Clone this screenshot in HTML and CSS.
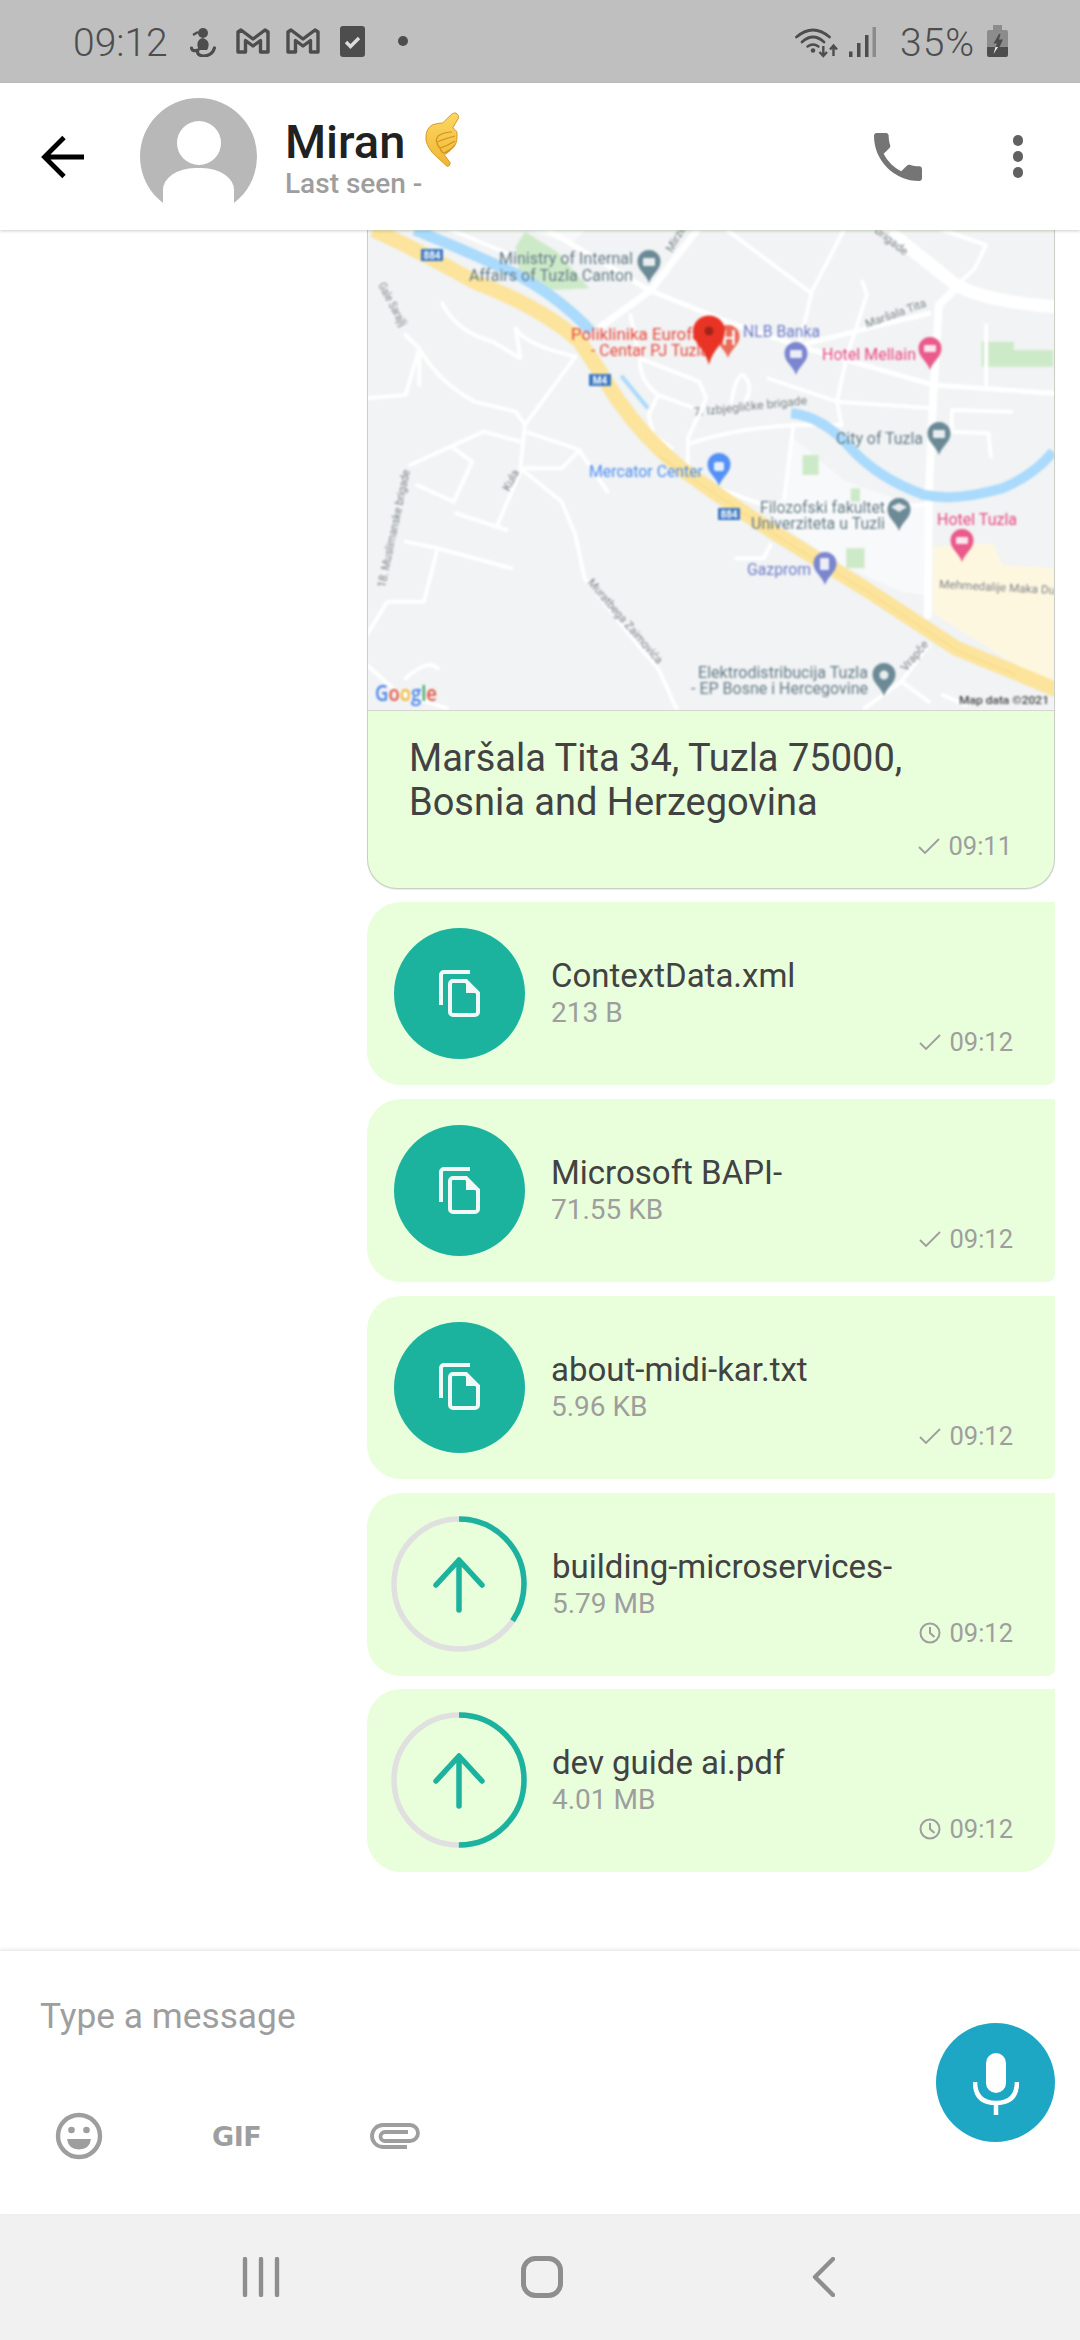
FILE: index.html
```html
<!DOCTYPE html>
<html lang="en">
<head>
<meta charset="utf-8">
<title>Miran</title>
<link rel="stylesheet" href="styles.css">
</head>
<body>
<div class="app">
  <div class="status">
    <span class="clock">09:12</span>
    <svg class="st st-person" width="26" height="30" viewBox="0 0 26 30"><circle cx="13" cy="6" r="5" fill="#4d4d4d"/><path d="M8 5 L3 8" stroke="#4d4d4d" stroke-width="2.5"/><path d="M13 11 C7 12 6 18 9 23 L17 23 C20 18 19 13 13 11Z" fill="#4d4d4d"/><path d="M1.5 21 Q2 25 8 23 Q6 28 13 29 Q22 29 24.5 21" fill="none" stroke="#4d4d4d" stroke-width="3.2" stroke-linecap="round"/></svg>
    <svg class="st st-m1" width="34" height="26" viewBox="0 0 34 26"><path d="M2 4 V24 H9.500 V12.500 L17 18 L24.500 12.500 V24 H32 V4 L29 2 L17 11 L5 2 Z" fill="none" stroke="#4d4d4d" stroke-width="3.400" stroke-linejoin="round"/></svg>
    <svg class="st st-m2" width="34" height="26" viewBox="0 0 34 26"><path d="M2 4 V24 H9.500 V12.500 L17 18 L24.500 12.500 V24 H32 V4 L29 2 L17 11 L5 2 Z" fill="none" stroke="#4d4d4d" stroke-width="3.400" stroke-linejoin="round"/></svg>
    <svg class="st st-check" width="25" height="31" viewBox="0 0 25 31"><rect width="25" height="31" rx="3" fill="#4d4d4d"/><path d="M6 16 L10.500 20.500 L19 12" fill="none" stroke="#dcdcdc" stroke-width="3.400"/></svg>
    <span class="st-dot"></span>
    <span class="grow"></span>
    <svg class="st" width="44" height="32" viewBox="0 0 44 32"><g fill="none" stroke="#4d4d4d" stroke-width="2.800" stroke-linecap="round"><path d="M1.500 11 Q18 -3 34.500 11"/><path d="M7 16 Q18 6 29 16"/><path d="M12.500 20.500 Q18 16.500 23.500 20.500" stroke-width="2.400"/></g><circle cx="18" cy="24.500" r="2.300" fill="#4d4d4d"/><path d="M28.300 20 V29 M24.500 26 L28.300 30 L32 26 M38.500 30 V20.500 M35 23.500 L38.500 19.500 L42 23.500" fill="none" stroke="#4d4d4d" stroke-width="2.400"/></svg>
    <svg class="st st-signal" width="28" height="30" viewBox="0 0 28 30"><rect x="0" y="24.500" width="3.500" height="5.500" fill="#4d4d4d"/><rect x="8" y="16" width="3.500" height="14" fill="#4d4d4d"/><rect x="16" y="8" width="3.500" height="22" fill="#4d4d4d"/><rect x="23.500" y="0" width="3.500" height="30" fill="#8c8c8c"/></svg>
    <span class="batt-text">35%</span>
    <svg class="st st-batt" width="21" height="32" viewBox="0 0 21 32"><rect x="6" y="0" width="9" height="6" fill="#8c8c8c"/><rect x="0" y="5" width="21" height="18" rx="2" fill="#8c8c8c"/><path d="M0 22 H21 V30 A2 2 0 0 1 19 32 H2 A2 2 0 0 1 0 30Z" fill="#4d4d4d"/><path d="M12 9 L6.500 18.500 H10 L8.500 22 H12.500 L16 14.500 H12 L13.500 9Z" fill="#4d4d4d"/><path d="M11 22 H8.500 L6.500 29 Z" fill="#f2f2f2"/></svg>
  </div>

  <header class="header">
    <svg class="back" width="44" height="44" viewBox="0 0 44 44"><path d="M23 2.500 L3.500 22 L23 41.500 M3.500 22 H43" fill="none" stroke="#000" stroke-width="4.800"/></svg>
    <div class="avatar"><span class="avatar-head"></span><span class="avatar-body"></span></div>
    <div class="who">
      <div class="name-row">
        <span class="name">Miran</span>
        <svg class="hand" width="38" height="56" viewBox="13 9 36 56"><defs><linearGradient id="hg" x1="0" y1="0" x2="0" y2="1"><stop offset="0" stop-color="#fbd862"/><stop offset="1" stop-color="#f2b632"/></linearGradient></defs><path d="M45 10 Q48 12 47.500 15 L41.700 25 Q47 28 46 32 Q46.500 38 44.300 41.700 L37.300 49.300 L33.300 51.700 L39.300 60 Q39 63.500 36 63.300 L21.700 50 Q14 41 15 33 Q15.500 25 21.700 21.700 Q27 20 31.700 20 L40 11.700 Q42.500 9.500 45 10Z" fill="url(#hg)" stroke="#d59a2c" stroke-width="1"/><path d="M27 33 Q33 29 41 29 M26 39 Q33 36 44 33 M29 45 Q36 43 44 38 M33 50 Q39 48 44 42 M27 33 Q24 38 26 39 Q26 43 29 45 Q30 49 33 50" fill="none" stroke="#cf9224" stroke-width="1.200"/></svg>
      </div>
      <div class="seen">Last seen -</div>
    </div>
    <span class="grow"></span>
    <svg class="phone" width="64" height="64" viewBox="0 0 24 24"><path fill="#757575" d="M6.620 10.790c1.440 2.830 3.760 5.140 6.590 6.590l2.200-2.200c.27-.27.67-.36 1.020-.24 1.120.37 2.330.57 3.570.57.550 0 1 .45 1 1V20c0 .55-.45 1-1 1-9.390 0-17-7.610-17-17 0-.55.45-1 1-1h3.500c.55 0 1 .45 1 1 0 1.250.2 2.450.57 3.570.11.350.03.740-.25 1.020l-2.200 2.200z"/></svg>
    <div class="dots"><span></span><span></span><span></span></div>
  </header>

  <main class="chat">
    <article class="bubble loc">
      <svg class="map" width="688" height="480" viewBox="0 0 688 480">
        <rect width="688" height="480" fill="#f1f3f4"/>
        <g transform="scale(.459 .3333) translate(-16 -15)">
          <path fill="#fef7e0" d="M1250 965 L1380 955 L1400 1020 L1511 1030 L1511 1400 L1430 1320 L1250 1165Z"/>
          <path fill="#f8f9fa" d="M945 640 L1060 770 L1230 850 L1230 1110 L1180 1100 L1050 1020 L950 930 L880 850 L925 820Z"/>
          <path fill="#f8f9fa" d="M370 15 L490 15 L460 60Z"/>
          <path fill="#cdeac8" d="M340 65 L360 20 L430 80 L500 190 L420 195 L350 170Z"/>
          <path fill="#cdeac8" d="M965 690 H1000 V750 H965Z M1070 790 H1090 V830 H1070Z M1060 970 H1100 V1030 H1060Z M1355 350 H1425 V375 H1511 V425 H1355Z"/>
          <g class="road" stroke-width="7">
            <path d="M735 15 L635 195 L525 305"/>
            <path d="M1150 15 L1290 170 Q1340 225 1511 245" stroke-width="13"/>
            <path d="M1295 195 L1262 240 L1250 500 L1240 800 L1238 1170" stroke-width="8"/>
            <path d="M410 15 L630 195 L800 290 L960 365 L1250 480 L1511 505" stroke-width="5"/>
            <path d="M960 360 L1240 265" stroke-width="5"/>
          </g>
          <g class="road" stroke-width="4">
            <path d="M800 15 L980 200 M1055 15 L985 200 L960 350"/>
            <path d="M1270 15 L1365 60 L1340 130 L1310 170"/>
            <path d="M890 460 L1040 530 L1250 550 M1095 170 L1105 210 L1060 400 L1040 530 L1050 600"/>
            <path d="M590 270 L610 400 Q610 470 650 510 L730 550 M610 400 L740 470 L755 520 L715 640 L715 720"/>
            <path d="M650 510 L630 570 L640 630 L680 670"/>
            <path d="M720 655 Q820 610 950 600 L1050 600 M945 600 L925 820"/>
            <path d="M810 530 Q820 450 835 450 Q860 480 840 530"/>
            <path d="M180 235 Q210 320 290 350 L350 400 L340 310 M340 310 Q360 360 470 395"/>
            <path d="M100 330 L130 370 Q170 470 250 530 L340 560 L360 600 M16 520 L100 510 L130 370 L130 480"/>
            <path d="M470 395 L360 600 L350 730 L440 830 L470 930 L490 1060 L600 1250 L650 1330 L690 1450"/>
            <path d="M110 720 L270 620 L350 650 M360 620 L470 670 L480 680 L540 800 M480 675 L440 730 L360 730 M205 670 L245 710 L205 830 L125 780"/>
            <path d="M100 950 L170 970 L330 1030 M170 970 L140 1130 L60 1130 L16 1230 M210 865 L320 915 M350 740 L300 900"/>
            <path d="M820 1000 L880 1000 L895 960 M1100 1450 L1180 1370 L1240 1260 M1180 1370 L1240 1430 M1270 1410 L1320 1440"/>
            <path d="M16 1320 L80 1400 L190 1450 M100 1360 Q150 1300 170 1330"/>
            <path d="M1290 555 L1420 560 M1290 555 L1290 620 L1370 625 L1375 695 M1365 300 L1365 480"/>
            <path d="M780 790 L900 850 L1230 840"/>
            <path d="M200 15 L330 90"/>
          </g>
          <g class="water">
            <path d="M120 15 Q220 70 330 140 Q430 210 505 320" stroke-width="11"/>
            <path d="M940 565 Q1010 575 1070 670 Q1130 760 1230 810 Q1300 830 1400 790 Q1470 750 1511 680" stroke-width="10"/>
            <path d="M570 452 L628 550" stroke-width="4"/>
          </g>
          <path class="highway" d="M30 15 Q120 70 250 170 Q400 250 480 350 Q520 430 560 520 Q620 640 700 730 Q800 830 900 920 L1100 1090 L1300 1270 L1520 1395"/>
          <path class="median" d="M650 690 Q720 760 800 830 L900 925 L1100 1095 L1300 1275 L1430 1350"/>
        </g>
        <g class="shield">
          <rect x="54" y="19" width="22" height="12"/><rect x="222" y="144" width="22" height="12"/><rect x="351" y="278" width="22" height="12"/>
        </g>
        <g class="shield-t">
          <text x="65" y="29">884</text><text x="233" y="154">M4</text><text x="362" y="288">884</text>
        </g>
        <g class="pins">
          <path class="p-gov" transform="translate(282 20)" d="M0 33 C-3 24 -11.500 20 -11.500 11.500 A11.500 11.500 0 1 1 11.500 11.500 C11.500 20 3 24 0 33Z"/>
          <path class="p-gov" transform="translate(572 192)" d="M0 33 C-3 24 -11.500 20 -11.500 11.500 A11.500 11.500 0 1 1 11.500 11.500 C11.500 20 3 24 0 33Z"/>
          <path class="p-gov" transform="translate(532 268)" d="M0 33 C-3 24 -11.500 20 -11.500 11.500 A11.500 11.500 0 1 1 11.500 11.500 C11.500 20 3 24 0 33Z"/>
          <path class="p-gov" transform="translate(517 433)" d="M0 33 C-3 24 -11.500 20 -11.500 11.500 A11.500 11.500 0 1 1 11.500 11.500 C11.500 20 3 24 0 33Z"/>
          <path class="p-ind" transform="translate(429 112)" d="M0 33 C-3 24 -11.500 20 -11.500 11.500 A11.500 11.500 0 1 1 11.500 11.500 C11.500 20 3 24 0 33Z"/>
          <path class="p-ind" transform="translate(458 322)" d="M0 33 C-3 24 -11.500 20 -11.500 11.500 A11.500 11.500 0 1 1 11.500 11.500 C11.500 20 3 24 0 33Z"/>
          <path class="p-pink" transform="translate(563 107)" d="M0 33 C-3 24 -11.500 20 -11.500 11.500 A11.500 11.500 0 1 1 11.500 11.500 C11.500 20 3 24 0 33Z"/>
          <path class="p-pink" transform="translate(595 299)" d="M0 33 C-3 24 -11.500 20 -11.500 11.500 A11.500 11.500 0 1 1 11.500 11.500 C11.500 20 3 24 0 33Z"/>
          <path class="p-blue" transform="translate(352 223)" d="M0 33 C-3 24 -11.500 20 -11.500 11.500 A11.500 11.500 0 1 1 11.500 11.500 C11.500 20 3 24 0 33Z"/>
          <path class="p-hosp" transform="translate(361 95)" d="M0 33 C-3 24 -11.500 20 -11.500 11.500 A11.500 11.500 0 1 1 11.500 11.500 C11.500 20 3 24 0 33Z"/>
        </g>
        <g class="pin-in">
          <rect x="276" y="28" width="12" height="8" rx="1"/><rect x="566" y="200" width="12" height="8" rx="1"/><path d="M524 277 L532 273 L540 277 L532 282Z"/><circle cx="517" cy="445" r="4.500"/><rect x="423" y="120" width="12" height="8" rx="1"/><rect x="453" y="328" width="9" height="12" rx="1"/><rect x="557" y="115" width="12" height="7" rx="1"/><rect x="589" y="307" width="12" height="7" rx="1"/><rect x="347" y="232" width="10" height="9" rx="2"/>
        </g>
        <text class="t-hosp" x="355" y="115">H</text>
        <text class="t-gray lab" x="132" y="34" textLength="134" lengthAdjust="spacingAndGlyphs">Ministry of Internal</text>
        <text class="t-gray lab" x="102" y="51" textLength="164" lengthAdjust="spacingAndGlyphs">Affairs of Tuzla Canton</text>
        <text class="t-red lab" x="204" y="110" textLength="151" lengthAdjust="spacingAndGlyphs">Poliklinika Eurofarm</text>
        <text class="t-red lab" x="224" y="126" textLength="118" lengthAdjust="spacingAndGlyphs">- Centar PJ Tuzla</text>
        <text class="t-ind lab" x="376" y="107" textLength="77" lengthAdjust="spacingAndGlyphs">NLB Banka</text>
        <text class="t-pink lab" x="455" y="130" textLength="94" lengthAdjust="spacingAndGlyphs">Hotel Mellain</text>
        <text class="t-gray lab" x="469" y="214" textLength="87" lengthAdjust="spacingAndGlyphs">City of Tuzla</text>
        <text class="t-blue lab" x="222" y="247" textLength="114" lengthAdjust="spacingAndGlyphs">Mercator Center</text>
        <text class="t-gray lab" x="393" y="283" textLength="125" lengthAdjust="spacingAndGlyphs">Filozofski fakultet</text>
        <text class="t-gray lab" x="384" y="299" textLength="134" lengthAdjust="spacingAndGlyphs">Univerziteta u Tuzli</text>
        <text class="t-ind lab" x="380" y="345" textLength="64" lengthAdjust="spacingAndGlyphs">Gazprom</text>
        <text class="t-pink lab" x="570" y="295" textLength="80" lengthAdjust="spacingAndGlyphs">Hotel Tuzla</text>
        <text class="t-gray lab" x="331" y="448" textLength="170" lengthAdjust="spacingAndGlyphs">Elektrodistribucija Tuzla</text>
        <text class="t-gray lab" x="324" y="464" textLength="177" lengthAdjust="spacingAndGlyphs">- EP Bosne i Hercegovine</text>
        <text class="t-data" x="592" y="474" textLength="90" lengthAdjust="spacingAndGlyphs">Map data ©2021</text>
        <text class="t-google" x="8" y="471" textLength="62" lengthAdjust="spacingAndGlyphs"><tspan class="g-b">G</tspan><tspan class="g-r">o</tspan><tspan class="g-y">o</tspan><tspan class="g-b">g</tspan><tspan class="g-g">l</tspan><tspan class="g-r">e</tspan></text>
        <text class="t-road" transform="translate(500 98) rotate(-20)">Maršala Tita</text>
        <text class="t-road" transform="translate(327 186) rotate(-6)" textLength="114" lengthAdjust="spacingAndGlyphs">7. Izbjegličke brigade</text>
        <text class="t-road" transform="translate(572 358) rotate(3)" textLength="116" lengthAdjust="spacingAndGlyphs">Mehmedalije Maka Du</text>
        <text class="t-road" transform="translate(220 353) rotate(49)" textLength="108" lengthAdjust="spacingAndGlyphs">Muratbega Zaimovića</text>
        <text class="t-road" transform="translate(18 358) rotate(-78)" textLength="120" lengthAdjust="spacingAndGlyphs">18. Muslimanske brigade</text>
        <text class="t-road" transform="translate(11 55) rotate(62)" textLength="48" lengthAdjust="spacingAndGlyphs">Gale Sarajlj</text>
        <text class="t-road" transform="translate(305 23) rotate(-60)">Mirze</text>
        <text class="t-road" transform="translate(507 2) rotate(38)">brigade</text>
        <text class="t-road" transform="translate(142 262) rotate(-62)">Kula</text>
        <text class="t-road" transform="translate(539 442) rotate(-50)">Vrapče</text>
        <g class="red-pin">
          <path d="M342 135 C338 118 326 114 326 101 A16 15.500 0 1 1 358 101 C358 114 346 118 342 135Z"/>
          <circle class="red-dot" cx="342" cy="101" r="4.500"/>
        </g>
      </svg>
      <div class="loc-body">
        <div class="loc-text">Maršala Tita 34, Tuzla 75000,<br>Bosnia and Herzegovina</div>
        <div class="meta meta-loc">
          <svg class="tick" width="22" height="16" viewBox="0 0 22 16"><path d="M1 9 L7 15 L21 1" fill="none" stroke="#9e9e9e" stroke-width="1.800"/></svg>
          <span>09:11</span>
        </div>
      </div>
    </article>

    <article class="bubble file">
      <div class="file-icon">
        <svg width="42" height="48" viewBox="0 0 42 48"><path d="M2 35 V5 A3 3 0 0 1 5 2 H31" fill="none" stroke="#f0f9f6" stroke-width="4"/><path d="M14 11 H27 L39 23 V42 A3 3 0 0 1 36 45 H14 A3 3 0 0 1 11 42 V14 A3 3 0 0 1 14 11Z" fill="none" stroke="#f0f9f6" stroke-width="4"/><path d="M27 11 L39 23 H27Z" fill="#f0f9f6"/></svg>
      </div>
      <div class="file-info"><div class="fname">ContextData.xml</div><div class="fsize">213 B</div></div>
      <div class="meta meta-file">
        <svg class="tick" width="22" height="16" viewBox="0 0 22 16"><path d="M1 9 L7 15 L21 1" fill="none" stroke="#9e9e9e" stroke-width="1.800"/></svg>
        <span>09:12</span>
      </div>
    </article>

    <article class="bubble file">
      <div class="file-icon">
        <svg width="42" height="48" viewBox="0 0 42 48"><path d="M2 35 V5 A3 3 0 0 1 5 2 H31" fill="none" stroke="#f0f9f6" stroke-width="4"/><path d="M14 11 H27 L39 23 V42 A3 3 0 0 1 36 45 H14 A3 3 0 0 1 11 42 V14 A3 3 0 0 1 14 11Z" fill="none" stroke="#f0f9f6" stroke-width="4"/><path d="M27 11 L39 23 H27Z" fill="#f0f9f6"/></svg>
      </div>
      <div class="file-info"><div class="fname">Microsoft BAPI-</div><div class="fsize">71.55 KB</div></div>
      <div class="meta meta-file">
        <svg class="tick" width="22" height="16" viewBox="0 0 22 16"><path d="M1 9 L7 15 L21 1" fill="none" stroke="#9e9e9e" stroke-width="1.800"/></svg>
        <span>09:12</span>
      </div>
    </article>

    <article class="bubble file">
      <div class="file-icon">
        <svg width="42" height="48" viewBox="0 0 42 48"><path d="M2 35 V5 A3 3 0 0 1 5 2 H31" fill="none" stroke="#f0f9f6" stroke-width="4"/><path d="M14 11 H27 L39 23 V42 A3 3 0 0 1 36 45 H14 A3 3 0 0 1 11 42 V14 A3 3 0 0 1 14 11Z" fill="none" stroke="#f0f9f6" stroke-width="4"/><path d="M27 11 L39 23 H27Z" fill="#f0f9f6"/></svg>
      </div>
      <div class="file-info"><div class="fname">about-midi-kar.txt</div><div class="fsize">5.96 KB</div></div>
      <div class="meta meta-file">
        <svg class="tick" width="22" height="16" viewBox="0 0 22 16"><path d="M1 9 L7 15 L21 1" fill="none" stroke="#9e9e9e" stroke-width="1.800"/></svg>
        <span>09:12</span>
      </div>
    </article>

    <article class="bubble file">
      <svg class="ring" width="136" height="136" viewBox="0 0 136 136">
        <circle class="ring-bg" cx="68" cy="68" r="65"/>
        <circle class="ring-fg" cx="68" cy="68" r="65" stroke-dasharray="141 408" transform="rotate(-90 68 68)"/>
        <path class="ring-arrow" d="M68 94 V46 M45 69 L68 44 L91 69"/>
      </svg>
      <div class="file-info info-up"><div class="fname">building-microservices-</div><div class="fsize">5.79 MB</div></div>
      <div class="meta meta-file">
        <svg class="clock-ic" width="22" height="22" viewBox="0 0 22 22"><circle cx="11" cy="11" r="9.500" fill="none" stroke="#9e9e9e" stroke-width="2"/><path d="M11 5 V11 L15.500 15" fill="none" stroke="#9e9e9e" stroke-width="2"/></svg>
        <span>09:12</span>
      </div>
    </article>

    <article class="bubble file last">
      <svg class="ring" width="136" height="136" viewBox="0 0 136 136">
        <circle class="ring-bg" cx="68" cy="68" r="65"/>
        <circle class="ring-fg" cx="68" cy="68" r="65" stroke-dasharray="204 408" transform="rotate(-90 68 68)"/>
        <path class="ring-arrow" d="M68 94 V46 M45 69 L68 44 L91 69"/>
      </svg>
      <div class="file-info info-up"><div class="fname">dev guide ai.pdf</div><div class="fsize">4.01 MB</div></div>
      <div class="meta meta-file">
        <svg class="clock-ic" width="22" height="22" viewBox="0 0 22 22"><circle cx="11" cy="11" r="9.500" fill="none" stroke="#9e9e9e" stroke-width="2"/><path d="M11 5 V11 L15.500 15" fill="none" stroke="#9e9e9e" stroke-width="2"/></svg>
        <span>09:12</span>
      </div>
    </article>
  </main>

  <footer class="composer">
    <div class="input-col">
      <div class="placeholder">Type a message</div>
      <div class="tools">
        <svg class="tool-smile" width="48" height="48" viewBox="0 0 48 48"><circle cx="24" cy="24" r="21" fill="none" stroke="#9e9e9e" stroke-width="4.400"/><circle cx="16.500" cy="18" r="3.300" fill="#9e9e9e"/><circle cx="31.500" cy="18" r="3.300" fill="#9e9e9e"/><path d="M12 27 H36 Q34.500 37.500 24 37.500 Q13.500 37.500 12 27Z" fill="#9e9e9e"/></svg>
        <span class="tool-gif">GIF</span>
        <svg class="tool-clip" width="52" height="26" viewBox="0 0 52 26"><path d="M37 24 H13 A11 11 0 0 1 13 2 H40 A8 8 0 0 1 40 18 H15 A4.500 4.500 0 0 1 15 9 H38" fill="none" stroke="#9e9e9e" stroke-width="3.800"/></svg>
      </div>
    </div>
    <div class="mic">
      <svg width="46" height="64" viewBox="0 0 46 64"><rect x="13" y="2" width="20" height="40" rx="10" fill="#fff"/><path d="M2 31 Q2 52 23 52 Q44 52 44 31 M23 52 V64" fill="none" stroke="#fff" stroke-width="4.500"/></svg>
    </div>
  </footer>

  <nav class="navbar">
    <svg width="38" height="40" viewBox="0 0 38 40"><path d="M3 2 V38 M19 2 V38 M35 2 V38" stroke="#8e8e8e" stroke-width="4.400" stroke-linecap="round"/></svg>
    <svg class="nav-home" width="42" height="42" viewBox="0 0 42 42"><rect x="2.500" y="2.500" width="37" height="37" rx="12" fill="none" stroke="#8e8e8e" stroke-width="5"/></svg>
    <svg class="nav-back" width="23" height="40" viewBox="0 0 23 40"><path d="M21 2 L3 20 L21 38" fill="none" stroke="#8e8e8e" stroke-width="4.400" stroke-linecap="round" stroke-linejoin="round"/></svg>
  </nav>
</div>
</body>
</html>
```
FILE: styles.css
```css
* { box-sizing: border-box; }
html, body { margin: 0; padding: 0; }
body { width: 1080px; height: 2340px; overflow: hidden; font-family: Roboto, "Noto Sans", sans-serif; background: #fff; }
svg { display: block; flex: none; }
.app { display: flex; flex-direction: column; width: 1080px; height: 2340px; }
.grow { flex: 1; }

.status { height: 83px; flex: none; background: #bfbfbf; display: flex; align-items: flex-start; padding: 0 72px 0 73px; color: #4d4d4d; font-weight: 300; font-size: 39px; }
.clock { line-height: 44px; margin-top: 21px; width: 93px; }
.st { margin-top: 26px; }
.st-person { margin-left: 24px; margin-top: 27px; }
.st-m1 { margin-left: 20px; margin-top: 28px; }
.st-m2 { margin-left: 16px; margin-top: 28px; }
.st-check { margin-left: 20px; }
.st-dot { width: 10px; height: 10px; border-radius: 50%; background: #4d4d4d; margin: 36px 0 0 33px; }
.st-signal { margin: 27px 0 0 10px; }
.batt-text { margin: 21px 0 0 23px; line-height: 44px; letter-spacing: 1px; width: 87px; }
.st-batt { margin-top: 25px; }

.header { height: 147px; flex: none; background: #fff; display: flex; align-items: center; padding: 0 0 0 41px; box-shadow: 0 1px 3px rgba(0,0,0,.2); position: relative; z-index: 2; }
.avatar { width: 117px; height: 117px; border-radius: 50%; background: #b8b8b8; margin-left: 55px; display: flex; flex-direction: column; align-items: center; flex: none; }
.avatar-head { width: 44px; height: 44px; border-radius: 50%; background: #fff; margin-top: 23px; flex: none; }
.avatar-body { width: 71px; height: 52px; flex: none; margin-top: 3px; background: #fff; border-radius: 32px 32px 0 0 / 22px 22px 0 0; }
.who { margin-left: 28px; display: flex; flex-direction: column; }
.name-row { display: flex; align-items: center; height: 56px; }
.name { font-size: 47px; font-weight: 500; color: #212121; line-height: 56px; }
.hand { margin: -4px 0 0 18px; }
.seen { font-size: 28px; font-weight: 500; color: #9e9e9e; line-height: 30px; margin-top: -1px; }
.phone { margin-right: 83px; }
.dots { display: flex; flex-direction: column; gap: 5.500px; margin-right: 57px; }
.dots span { width: 10.500px; height: 10.500px; border-radius: 50%; background: #616161; }

.chat { flex: 1; display: flex; flex-direction: column; align-items: flex-end; gap: 13.750px; padding: 0 25px 0 0; overflow: hidden; background: #fff; min-height: 0; }
.bubble { width: 688px; background: #e9fedb; flex: none; }
.loc { border: 1px solid #c9cfc4; border-top: 0; border-radius: 0 0 30px 30px; overflow: hidden; height: 658.500px; box-shadow: 0 1px 1px rgba(0,0,0,.08); }
.map { margin: 0 0 0 -1px; filter: blur(.9px); }
.loc-body { border-top: 1px solid #d4d6d0; padding: 26px 0 0 41px; position: relative; height: 178px; }
.loc-text { font-size: 38px; line-height: 43.500px; color: #424242; }
.meta { display: flex; align-items: center; font-size: 25.500px; color: #9e9e9e; position: absolute; right: 42px; line-height: 30px; }
.meta span { margin-left: 8px; }
.meta-loc { bottom: 27px; }
.file { position: relative; height: 183px; display: flex; align-items: flex-start; border-radius: 34px 0 8px 34px; padding: 26px 0 0 27px; }
.file.last { border-radius: 34px 0 34px 34px; }
.meta-file { top: 125px; }
.file-icon { width: 131px; height: 131px; border-radius: 50%; background: #1cb39e; display: flex; align-items: center; justify-content: center; flex: none; }
.file-info { margin-left: 26px; }
.fname { font-size: 33px; line-height: 40px; color: #424242; margin-top: 28px; }
.fsize { font-size: 28px; line-height: 32px; color: #9e9e9e; margin-top: 1px; }
.ring { margin: -3px 0 0 -3px; }
.info-up { margin-left: 25px; }
.ring-bg { fill: none; stroke: #e0e0e0; stroke-width: 5.500; }
.ring-fg { fill: none; stroke: #1cb39e; stroke-width: 5.500; }
.ring-arrow { fill: none; stroke: #1cb39e; stroke-width: 5.500; stroke-linecap: round; stroke-linejoin: round; }

.composer { height: 264px; flex: none; background: #fff; border-top: 1px solid #ececec; box-shadow: 0 -1px 3px rgba(0,0,0,.08); display: flex; padding: 0 25px 0 40px; position: relative; z-index: 2; }
.input-col { flex: 1; display: flex; flex-direction: column; }
.placeholder { font-size: 35.300px; color: #9e9e9e; line-height: 40px; margin-top: 45px; }
.tools { display: flex; align-items: center; margin-top: 76px; height: 48px; }
.tool-smile { margin-left: 15px; }
.tool-gif { font-family: "DejaVu Sans", sans-serif; font-weight: 700; font-size: 27px; color: #9e9e9e; margin-left: 109px; width: 50px; letter-spacing: -.5px; }
.tool-clip { margin-left: 108px; }
.mic { width: 119px; height: 119px; border-radius: 50%; background: #1ea7c5; margin-top: 72px; display: flex; align-items: center; justify-content: center; flex: none; }

.navbar { height: 126px; flex: none; background: #f1f1f1; display: flex; align-items: center; padding: 0 0 0 242px; margin-top: 0; }
.nav-home { margin-left: 241px; }
.nav-back { margin-left: 249px; }

.road path { fill: none; stroke: #fff; stroke-linecap: round; stroke-linejoin: round; vector-effect: non-scaling-stroke; }
.water path { fill: none; stroke: #aadafc; vector-effect: non-scaling-stroke; }
.highway { fill: none; stroke: #fce49c; stroke-width: 15px; vector-effect: non-scaling-stroke; }
.median { fill: none; stroke: #f6d884; stroke-width: 1px; vector-effect: non-scaling-stroke; }
.shield rect { fill: #3b78c4; }
.shield-t text { fill: #fff; font-size: 10px; font-weight: 700; text-anchor: middle; font-family: Roboto, sans-serif; }
.p-gov { fill: #6b8a96; }
.p-ind { fill: #7b86cf; }
.p-pink { fill: #ea5a8a; }
.p-blue { fill: #5491f5; }
.p-hosp { fill: #ea6b58; }
.pin-in { fill: #fff; opacity: .85; }
.t-hosp { fill: #fff; font-size: 20px; font-family: Roboto, sans-serif; font-weight: 500; }
.lab { font-family: Roboto, sans-serif; font-size: 16.500px; }
.t-gray { fill: #637b87; }
.t-red { fill: #e8483a; }
.t-ind { fill: #6d7bc9; }
.t-pink { fill: #e9487f; }
.t-blue { fill: #4d8ef0; }
.t-data { font-family: Roboto, sans-serif; font-size: 10.500px; fill: #444; font-weight: 500; }
.t-google { font-family: "Open Sans", sans-serif; font-size: 21px; font-weight: 600; }
.g-b { fill: #4a84ea; }
.g-r { fill: #e25241; }
.g-y { fill: #f2b632; }
.g-g { fill: #3ba55d; }
.t-road { font-family: Roboto, sans-serif; font-size: 11.500px; fill: #7d8488; }
.red-pin path { fill: #e93425; }
.red-dot { fill: #a0241a; }
```
